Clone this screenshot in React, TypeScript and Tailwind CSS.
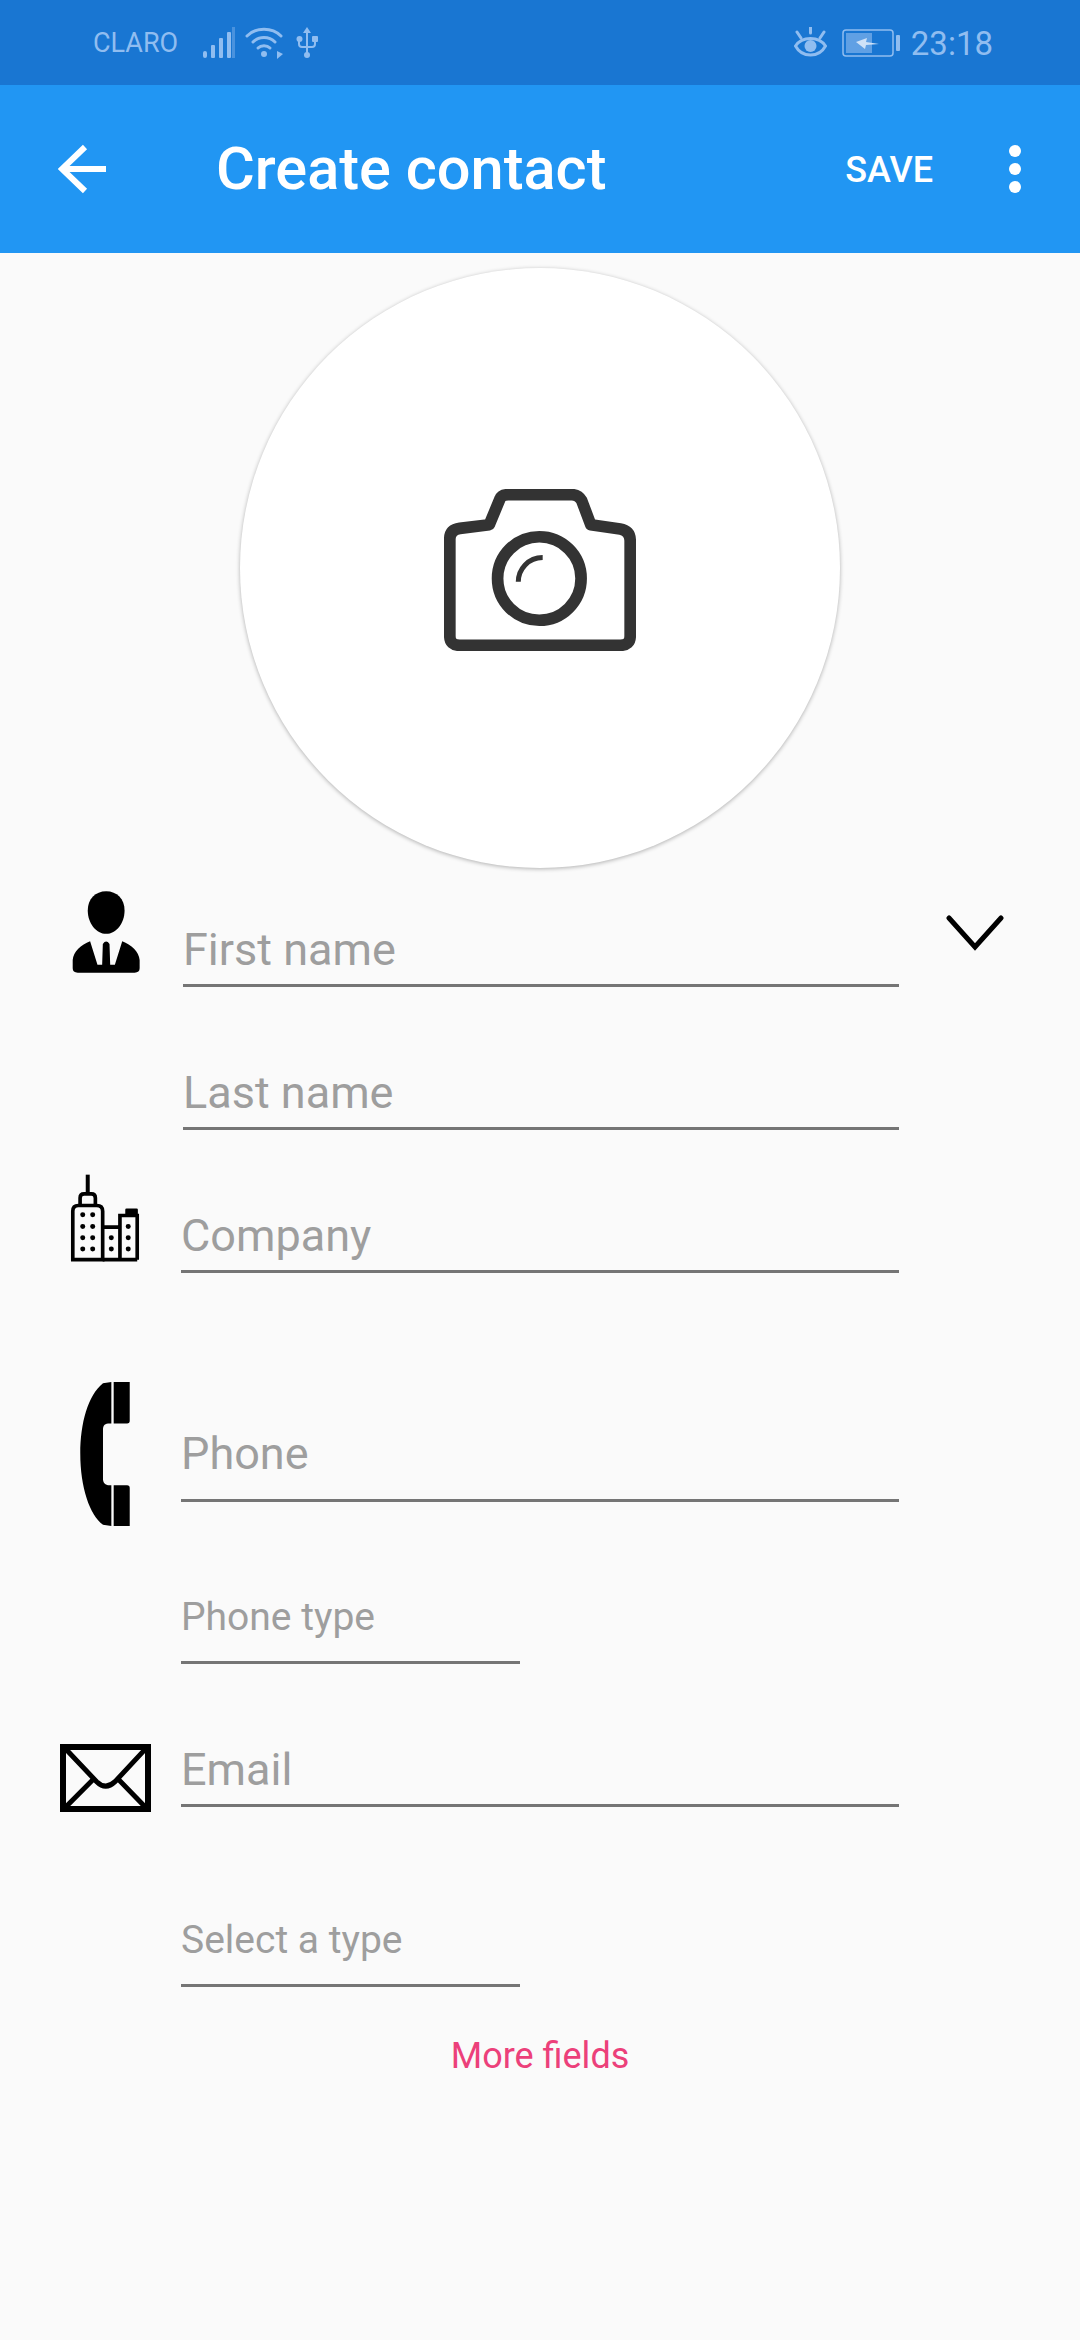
import React from "react";

const Field = ({ label, className, textClass }: { label: string; className: string; textClass: string }) => (
  <div className={`flex items-end border-b-[3px] border-[#757575] ${className}`}>
    <span className={`text-[#9e9e9e] ${textClass}`}>{label}</span>
  </div>
);

const PersonIcon = () => (
  <svg width="68" height="82" viewBox="98 64 203 245" fill="#000">
    <path d="M200 65 C232 65 255 88 255 122 C255 160 230 192 200 192 C170 192 145 160 145 122 C145 88 168 65 200 65 Z" />
    <path d="M100 270 C102 245 125 225 152 214 L174 284 L188 284 L190 222 Q200 208 210 222 L212 284 L226 284 L248 214 C275 225 298 245 300 270 L300 295 Q300 308 285 308 L115 308 Q100 308 100 295 Z" />
  </svg>
);

const BuildingIcon = () => {
  const dots: [number, number][] = [
    [130, 1033], [160, 1033], [130, 1068], [160, 1068], [130, 1102], [160, 1102], [130, 1136], [160, 1136],
    [216, 1102], [216, 1136], [267, 1068], [267, 1102], [267, 1136],
  ];
  return (
    <svg width="70" height="88" viewBox="92 910 210 265" fill="none" stroke="#000" strokeWidth="11">
      <path d="M145 912 V965" strokeWidth="12" />
      <path d="M122 1003 V982 Q122 970 134 970 H156 Q168 970 168 982 V1003" />
      <path d="M100 1168 V1022 Q100 1005 117 1005 H172 Q190 1005 190 1022 V1168 Z" />
      <path d="M190 1070 H242 M242 1168 V1035 H294 V1168 M190 1168 H294" />
      <rect x="258" y="1014" width="38" height="22" rx="4" fill="#000" stroke="none" />
      {dots.map(([x, y]) => (
        <circle key={`${x}-${y}`} cx={x} cy={y} r="7.5" fill="#000" stroke="none" />
      ))}
    </svg>
  );
};

const PhoneIcon = () => (
  <svg width="50" height="144" viewBox="122 66 148 431" fill="#000">
    <path d="M215 66 L190 70 C145 105 122 190 122 280 C122 380 150 465 190 493 L215 497 L215 375 L205 375 C193 372 190 365 190 355 L190 210 C190 198 193 192 205 190 L215 190 Z" />
    <path d="M222 66 H270 V182 Q270 190 262 190 H222 Z M222 375 H262 Q270 375 270 383 V497 H222 Z" />
  </svg>
);

const MailIcon = () => (
  <svg width="91" height="68" viewBox="60 1152 273 204" fill="none" stroke="#000">
    <rect x="69" y="1161" width="255" height="186" strokeWidth="18" />
    <path d="M75 1165 L170 1265 Q197 1292 225 1265 L318 1165" strokeWidth="15" />
    <path d="M78 1340 L160 1258 M315 1340 L235 1258" strokeWidth="15" />
  </svg>
);

export default function App() {
  return (
    <div
      className="w-[1080px] h-[2340px] bg-[#fafafa] overflow-hidden"
      style={{ fontFamily: "Roboto, sans-serif" }}
    >
      <div className="h-[85px] bg-[#1976d2] flex items-center pl-[93px] pr-[87px] text-[#90bdf0]">
        <span className="mt-[2px] text-[27px] leading-none">CLARO</span>
        <svg className="ml-[24px]" width="34" height="32" viewBox="0 0 34 32" fill="currentColor">
          <rect x="1" y="24" width="4" height="7" rx="2" />
          <rect x="9" y="18" width="4" height="13" rx="1" />
          <rect x="17" y="11" width="4" height="20" rx="1" />
          <rect x="25" y="5" width="4" height="26" rx="1" />
          <rect x="30" y="0" width="3" height="31" opacity="0.4" />
        </svg>
        <svg className="ml-[9px]" width="38" height="32" viewBox="0 0 38 32" fill="none" stroke="currentColor" strokeWidth="3" strokeLinecap="round">
          <path d="M2 9 C11 0 27 0 36 9" />
          <path d="M8 15 C14 9 24 9 30 15" />
          <path d="M13 21 C16 18 22 18 25 21" />
          <circle cx="19" cy="27" r="3" fill="currentColor" stroke="none" />
          <path d="M32 24 L32 32 L38 27 Z" fill="currentColor" stroke="none" />
        </svg>
        <svg className="ml-[13px]" width="22" height="32" viewBox="0 0 22 32" fill="currentColor">
          <path d="M11 0 L15 6 H7 Z" />
          <rect x="10" y="5" width="2" height="24" />
          <circle cx="11" cy="28" r="3" />
          <circle cx="3.5" cy="12" r="3" />
          <rect x="16" y="9" width="6" height="6" rx="1" />
          <path d="M3 14 V17 Q3 20 6 20 H16 Q19 20 19 17 V14" fill="none" stroke="currentColor" strokeWidth="2" />
        </svg>
        <div className="flex-1" />
        <svg width="33" height="31" viewBox="0 0 33 31" fill="none" stroke="currentColor" strokeWidth="3">
          <path d="M1.5 19 C8 9 25 9 31.5 19 C25 31 8 31 1.5 19 Z" />
          <circle cx="16.5" cy="19" r="6" fill="currentColor" stroke="none" />
          <path d="M16.5 0 V6 M3 5 L7 11 M30 5 L26 11" strokeLinecap="round" />
        </svg>
        <svg className="ml-[15px]" width="58" height="28" viewBox="0 0 58 28" fill="none">
          <rect x="1" y="1" width="50" height="26" rx="3" stroke="currentColor" strokeWidth="1.5" />
          <rect x="4" y="4" width="26" height="20" fill="currentColor" opacity="0.6" />
          <path d="M14 13 L25 9 L24 13 L37 15 L24 16 L23 20 Z" fill="#cfe2f8" />
          <rect x="54" y="6" width="4" height="16" rx="1" fill="currentColor" />
        </svg>
        <span className="ml-[11px] mt-[2px] text-[33px] leading-none">23:18</span>
      </div>

      <div className="h-[168px] bg-[#2196f3] flex items-center text-white">
        <svg className="ml-[58px]" width="48" height="50" viewBox="0 0 48 50" fill="none" stroke="#fff" strokeWidth="6">
          <path d="M48 25 H4 M27 3 L4 25 L27 47" />
        </svg>
        <span className="ml-[110px] mt-[2px] text-[59.5px] font-medium leading-none">Create contact</span>
        <span className="ml-auto mt-[2px] text-[36px] font-medium leading-none">SAVE</span>
        <svg className="ml-[76px] mr-[59px]" width="12" height="48" viewBox="0 0 12 48" fill="#fff">
          <circle cx="6" cy="6" r="6" />
          <circle cx="6" cy="24" r="6" />
          <circle cx="6" cy="42" r="6" />
        </svg>
      </div>

      <div className="flex justify-center pt-[15px]">
        <div className="w-[600px] h-[600px] rounded-full bg-white flex items-center justify-center shadow-[0_1px_4px_rgba(0,0,0,0.3)]">
          <svg className="mt-[4px]" width="192" height="162" viewBox="133 90 574 485" fill="none" stroke="#333" strokeWidth="35" strokeLinejoin="round">
            <path d="M150 240 Q150 212 180 208 L268 197 L300 120 Q305 107 325 107 H515 Q535 107 545 125 L572 197 L660 210 Q690 215 690 245 V530 Q690 558 660 558 H180 Q150 558 150 530 Z" />
            <circle cx="418" cy="358" r="125" strokeWidth="35" />
            <path d="M355 368 C355 330 385 295 428 295" strokeWidth="15" />
          </svg>
        </div>
      </div>

      <div className="flex h-[119px]">
        <div className="w-[183px] flex justify-end items-end pr-[43px] pb-[14px]">
          <PersonIcon />
        </div>
        <Field label="First name" className="w-[716px] h-full" textClass="text-[45px] leading-none pb-[12px]" />
        <svg className="ml-[47px] mt-[47px]" width="58" height="36" viewBox="0 0 58 36" fill="none" stroke="#000" strokeWidth="5" strokeLinecap="round">
          <path d="M3 3 L29 32 L55 3" />
        </svg>
      </div>

      <div className="flex h-[143px]">
        <div className="w-[183px]" />
        <Field label="Last name" className="w-[716px] h-full" textClass="text-[45px] leading-none pb-[12px]" />
      </div>

      <div className="flex h-[143px]">
        <div className="w-[181px] flex justify-end items-end pr-[41px] pb-[11px]">
          <BuildingIcon />
        </div>
        <Field label="Company" className="w-[718px] h-full" textClass="text-[45px] leading-none pb-[12px]" />
      </div>

      <div className="flex h-[229px]">
        <div className="w-[181px] flex justify-end items-end pr-[51px] -mb-[24px]">
          <PhoneIcon />
        </div>
        <Field label="Phone" className="w-[718px] h-full" textClass="text-[45px] leading-none pb-[23px]" />
      </div>

      <div className="flex h-[162px]">
        <div className="w-[181px]" />
        <Field label="Phone type" className="w-[339px] h-full" textClass="text-[39px] leading-none pb-[24px]" />
      </div>

      <div className="flex h-[143px]">
        <div className="w-[181px] flex justify-end items-end pr-[30px] -mb-[5px]">
          <MailIcon />
        </div>
        <Field label="Email" className="w-[718px] h-full" textClass="text-[45px] leading-none pb-[12px]" />
      </div>

      <div className="flex h-[180px]">
        <div className="w-[181px]" />
        <Field label="Select a type" className="w-[339px] h-full" textClass="text-[39px] leading-none pb-[24px]" />
      </div>

      <div className="text-center text-[#ec407a] text-[36px] leading-none pt-[51px]">More fields</div>
    </div>
  );
}
